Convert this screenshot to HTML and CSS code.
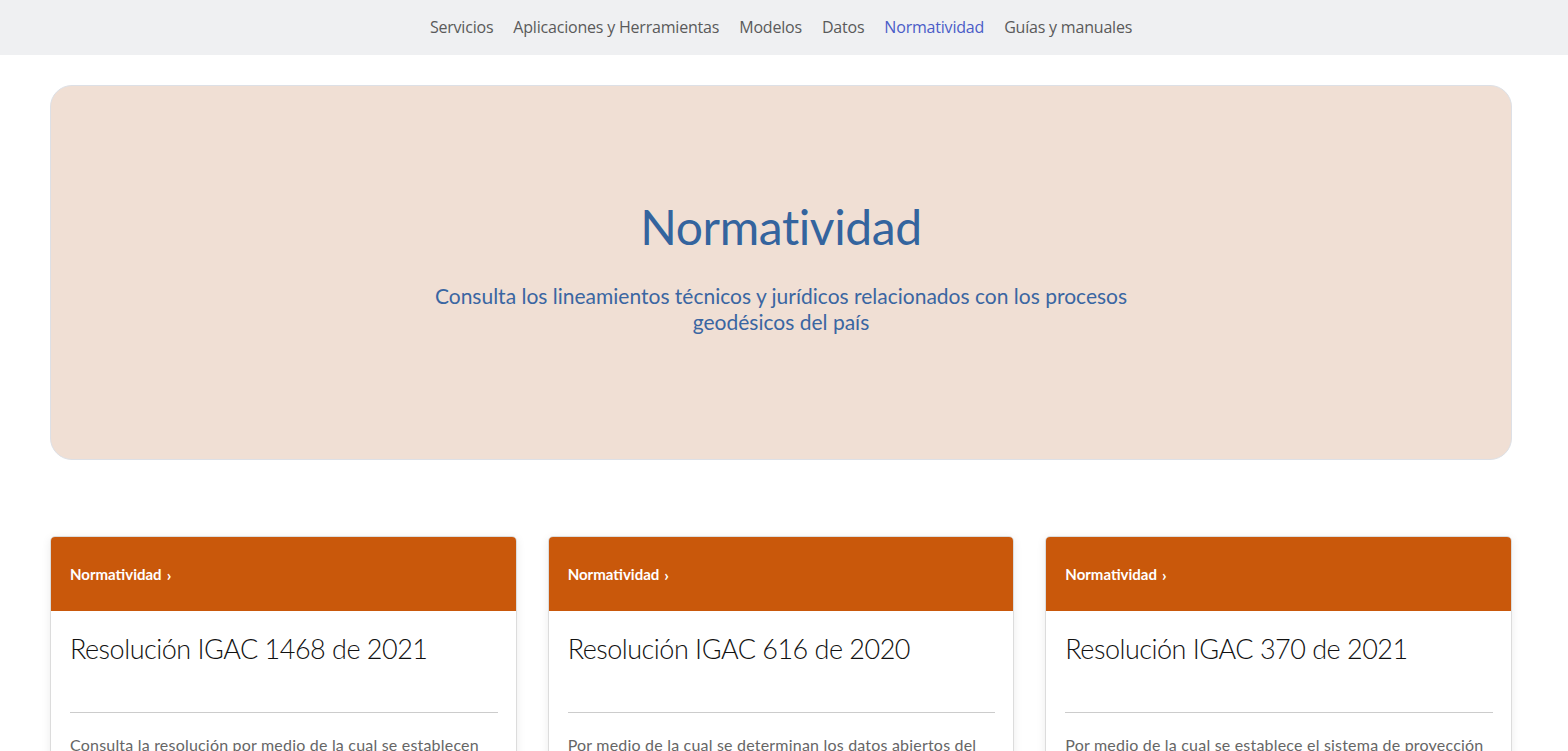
FILE: index.html
```html
<!DOCTYPE html>
<html lang="es">
<head>
<meta charset="utf-8">
<title>Normatividad</title>
<link rel="stylesheet" href="styles.css">
</head>
<body>
<nav class="topnav">
  <a href="#">Servicios</a>
  <a href="#">Aplicaciones y Herramientas</a>
  <a href="#">Modelos</a>
  <a href="#">Datos</a>
  <a href="#" class="active">Normatividad</a>
  <a href="#">Guías y manuales</a>
</nav>
<main class="page">
  <section class="hero">
    <h1>Normatividad</h1>
    <p>Consulta los lineamientos técnicos y jurídicos relacionados con los procesos geodésicos del país</p>
  </section>
  <section class="cards">
    <article class="card">
      <div class="card-head">Normatividad <span class="chev">›</span></div>
      <div class="card-body">
        <h2>Resolución IGAC 1468 de 2021</h2>
        <hr>
        <p>Consulta la resolución por medio de la cual se establecen</p>
      </div>
    </article>
    <article class="card">
      <div class="card-head">Normatividad <span class="chev">›</span></div>
      <div class="card-body">
        <h2>Resolución IGAC 616 de 2020</h2>
        <hr>
        <p>Por medio de la cual se determinan los datos abiertos del</p>
      </div>
    </article>
    <article class="card">
      <div class="card-head">Normatividad <span class="chev">›</span></div>
      <div class="card-body">
        <h2>Resolución IGAC 370 de 2021</h2>
        <hr>
        <p>Por medio de la cual se establece el sistema de proyección</p>
      </div>
    </article>
  </section>
</main>
</body>
</html>
```
FILE: styles.css
```css
* { box-sizing: border-box; }
html, body { margin: 0; padding: 0; background: #fff; }
body { font-family: "Lato", "Open Sans", sans-serif; overflow: hidden; }

.topnav {
  height: 55px;
  background: #eff0f2;
  display: flex;
  justify-content: center;
  align-items: center;
  gap: 20px;
  padding: 0 6px 2px 0;
  font-family: "Open Sans", sans-serif;
  font-size: 16px;
}
.topnav a { color: #5a5a5a; text-decoration: none; letter-spacing: -0.2px; }
.topnav a.active { color: #4a5cc8; }

.page { padding: 30px 56px 0 50px; }

.hero {
  height: 375px;
  background: #f0dfd4;
  border: 1px solid #dde0e6;
  border-radius: 22px;
  display: flex;
  flex-direction: column;
  align-items: center;
  justify-content: center;
  text-align: center;
  color: #3464a0;
  padding-bottom: 12px;
}
.hero h1 {
  margin: 0;
  font-weight: 400;
  font-size: 48px;
  line-height: 56px;
  color: #34649e;
  letter-spacing: -0.4px;
}
.hero p {
  margin: 28px 0 0;
  max-width: 740px;
  font-size: 21px;
  line-height: 26px;
  color: #3a66a2;
}

.cards {
  margin-top: 76px;
  display: grid;
  grid-template-columns: repeat(3, 1fr);
  gap: 31px;
}
.card {
  border: 1px solid #dcdcdc;
  border-radius: 5px;
  overflow: hidden;
  background: #fff;
  box-shadow: 0 2px 10px rgba(0,0,0,0.08);
  height: 250px;
}
.card-head {
  height: 74px;
  background: #c9580b;
  color: #fff;
  font-weight: 700;
  font-size: 15px;
  display: flex;
  align-items: center;
  padding: 0 19px 0;
  gap: 5px;
}
.chev { font-weight: 700; font-size: 16px; }
.card-body { padding: 0 18px 0 19px; }
.card-body h2 {
  margin: 21px 0 0;
  font-weight: 300;
  font-size: 27px;
  line-height: 34px;
  color: #111;
  letter-spacing: -0.5px;
  height: 80px;
}
.card-body hr {
  border: 0;
  border-top: 1px solid #cccccc;
  margin: 0;
}
.card-body p {
  margin: 21px 0 0;
  font-size: 16px;
  line-height: 22px;
  letter-spacing: 0.2px;
  color: #666;
}
```
